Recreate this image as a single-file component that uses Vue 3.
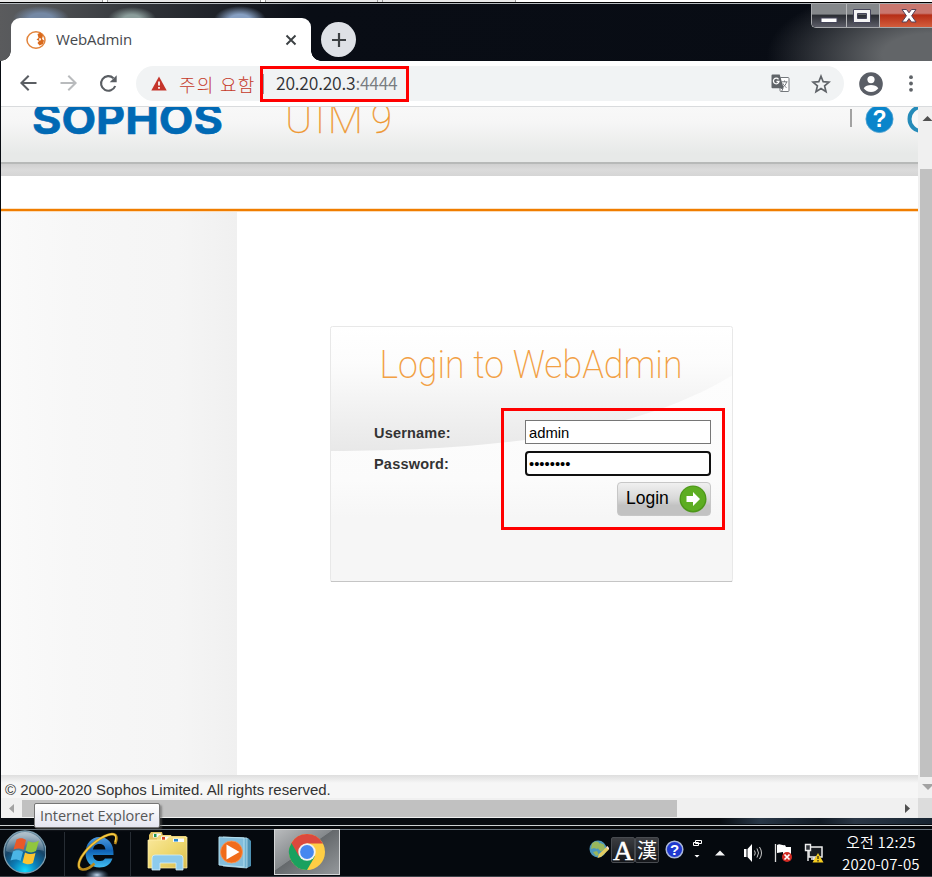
<script setup>
import { ref } from 'vue'

const username = ref('admin')
const password = ref('password')
</script>

<template>
  <div class="screen">
    <div class="behind"><i></i><i></i><i></i><i></i></div>

    <header class="titlebar">
      <div class="tab">
        <svg class="favicon" width="20" height="20" viewBox="0 0 20 20">
          <ellipse cx="10" cy="10" rx="9" ry="8.200" fill="#fff" stroke="#e2833a" stroke-width="1.500" />
          <path d="M11.500 4l3-1.500 2.500 3-1 3.500 2 1.500-1 3.500-3.500 1.500-2-2.500 1.500-2-2.500-1.500 2-1.500z" fill="#d9691c" />
          <path d="M13 8.500l1.500-.5.5 2-1.500 1z" fill="#fff" />
        </svg>
        <span class="tab-title">WebAdmin</span>
        <svg class="tab-close" width="12" height="12" viewBox="0 0 12 12"><path d="M1.500 1.500l9 9M10.500 1.500l-9 9" stroke="#3c4043" stroke-width="1.900" /></svg>
      </div>
      <div class="new-tab">
        <svg width="16" height="16" viewBox="0 0 16 16"><path d="M8 1v14M1 8h14" stroke="#3c4043" stroke-width="2.200" /></svg>
      </div>
      <div class="window-buttons">
        <div class="wb min"><svg width="18" height="8" viewBox="0 0 18 8"><rect x="1" y="2" width="16" height="4.500" fill="#fff" stroke="#45455a" /></svg></div>
        <div class="wb max"><svg width="20" height="16" viewBox="0 0 20 16"><path fill-rule="evenodd" d="M1.500 1.500h17v13h-17zM5.500 5.500v5h9v-5z" fill="#f4f4f4" stroke="#45455a" /></svg></div>
        <div class="wb close"><svg width="18" height="16" viewBox="0 0 18 16"><path d="M2 1.500h4.500L9 4.800l2.500-3.300H16L11.600 7.800l4.500 6.200h-4.700L9 10.600 6.600 14H1.900l4.500-6.200z" fill="#fff" stroke="#51425a" /></svg></div>
      </div>
    </header>

    <nav class="toolbar">
      <svg class="nav" width="20" height="20" viewBox="0 0 20 20"><path d="M18.500 9H4M10.700 1.700L3.400 9l7.300 7.300" fill="none" stroke="#5a5e63" stroke-width="2" /></svg>
      <svg class="nav" width="20" height="20" viewBox="0 0 20 20"><path d="M2.500 9h14.500M10.300 1.700L17.600 9l-7.300 7.300" fill="none" stroke="#b9bbbd" stroke-width="2" /></svg>
      <svg class="nav" width="20" height="20" viewBox="0 0 20 20"><path d="M17.200 12A7.300 7.300 0 1 1 15.500 4.200" fill="none" stroke="#5a5e63" stroke-width="2.100" /><path d="M18.700 1.300v7h-7z" fill="#5a5e63" /></svg>
      <div class="omnibox">
        <svg width="16" height="15" viewBox="0 0 16 15"><path d="M8 0.500L15.700 14.500H.3z" fill="#c5352b" /><path d="M8 5.500v4M8 11v1.800" stroke="#fff" stroke-width="1.700" /></svg>
        <span class="warn">주의 요함</span>
        <span class="sep"></span>
        <span class="url">20.20.20.3<em>:4444</em></span>
        <svg class="translate" width="19" height="19" viewBox="0 0 19 19">
          <rect x="9" y="3.500" width="9" height="14" rx="1" fill="#fff" stroke="#74787c" />
          <path d="M1.500.5h7.200l4 13.700H1.500a1 1 0 0 1-1-1V1.500a1 1 0 0 1 1-1z" fill="#606468" />
          <path d="M7.500 5.300A2.800 2.800 0 1 0 8 7.500H5.500" fill="none" stroke="#fff" stroke-width="1.300" />
          <path d="M10.500 7.800h6M13.500 6.500v1.300M15.500 8c-.5 2.500-2 4.200-3.500 5M12 9.500c.8 2 2.200 3.200 3.500 4M10 14.500l2 0-1.500 3" fill="none" stroke="#74787c" />
        </svg>
        <svg class="star" width="20" height="20" viewBox="0 0 20 20"><path d="M10 2.200l2.200 5.500 5.900.4-4.500 3.800 1.400 5.800-5-3.200-5 3.200 1.400-5.800L1.900 8.100l5.900-.4z" fill="none" stroke="#5f6368" stroke-width="1.700" /></svg>
      </div>
      <svg class="profile" width="24" height="24" viewBox="0 0 24 24"><circle cx="12" cy="12" r="11.800" fill="#5a5e66" /><circle cx="12" cy="7.600" r="3.600" fill="#fff" /><path d="M4.700 16.300c1.300-2.500 4.600-3.300 7.300-3.300s6 .8 7.300 3.300C17.600 18.600 15.300 20 12 20s-5.600-1.400-7.300-3.700z" fill="#fff" /></svg>
      <svg class="dots" width="4" height="18" viewBox="0 0 4 18"><g fill="#5f6368"><circle cx="2" cy="2.200" r="1.900" /><circle cx="2" cy="8.500" r="1.900" /><circle cx="2" cy="14.800" r="1.900" /></g></svg>
    </nav>

    <div class="viewport">
      <main class="page">
        <div class="brandbar">
          <svg class="logo" width="400" height="55" viewBox="0 0 400 55">
            <text class="sophos" x="31" y="27" textLength="191" lengthAdjust="spacingAndGlyphs">SOPHOS</text>
            <text class="utm" x="284" y="26" textLength="78" lengthAdjust="spacing">UTM</text>
            <text class="utm" x="370" y="26" textLength="21" lengthAdjust="spacingAndGlyphs">9</text>
          </svg>
          <svg class="help" width="70" height="55" viewBox="0 0 70 55">
            <rect x="2" y="2" width="2" height="18" fill="#a2a2a2" />
            <circle cx="31.500" cy="12" r="13.600" fill="#0a85cb" stroke="#56a3cf" stroke-width=".8" />
            <text x="31.500" y="20" text-anchor="middle">?</text>
            <circle cx="73.500" cy="12" r="12" fill="#f8f8f8" stroke="#258bb9" stroke-width="4" />
          </svg>
        </div>
        <div class="shade"></div>
        <div class="menu-row"></div>
        <div class="content">
          <aside class="sidebar"></aside>
          <section class="stage">
            <form class="card" @submit.prevent>
              <svg class="swoosh" width="403" height="256" viewBox="0 0 403 256">
                <defs>
                  <linearGradient id="upper" x1="0" y1="0" x2="0" y2="1"><stop offset="0" stop-color="#fff" /><stop offset=".3" stop-color="#fcfcfc" /><stop offset="1" stop-color="#e8e8e8" /></linearGradient>
                  <linearGradient id="lower" x1="0" y1="0" x2="0" y2="1"><stop offset=".2" stop-color="#fdfdfd" /><stop offset=".6" stop-color="#fbfbfb" /><stop offset=".75" stop-color="#f6f6f6" /><stop offset="1" stop-color="#f6f6f6" /></linearGradient>
                </defs>
                <rect width="403" height="256" fill="url(#lower)" />
                <path d="M0 0h403v49C325 96 210 125 0 125z" fill="url(#upper)" />
                <rect x=".5" y=".5" width="402" height="255" rx="2" fill="none" stroke="#e8e8e8" />
                <path d="M1 255.500h401" stroke="#c5c5c5" />
                <text class="headline" x="49.500" y="52" textLength="303" lengthAdjust="spacingAndGlyphs">Login to WebAdmin</text>
              </svg>
              <div class="fields">
                <label for="user">Username:</label>
                <input id="user" v-model="username" type="text" />
                <label for="pass">Password:</label>
                <input id="pass" v-model="password" class="active" type="password" />
                <button class="login">
                  <span>Login</span>
                  <svg width="28" height="28" viewBox="0 0 28 28">
                    <circle cx="14" cy="14" r="13.500" fill="#4d961a" /><circle cx="14" cy="13.700" r="12.200" fill="#5dad22" />
                    <path d="M7.500 11h6.500V7l7 7-7 7v-4H7.500z" fill="#fff" />
                  </svg>
                </button>
              </div>
            </form>
          </section>
        </div>
        <footer class="copyright">© 2000-2020 Sophos Limited. All rights reserved.</footer>
      </main>
      <div class="vscroll">
        <svg width="14" height="62" viewBox="0 0 14 62"><path d="M4.500 14l5-5 5 5z" fill="#505050" /></svg>
        <div class="vthumb"></div>
        <svg width="14" height="21" viewBox="0 0 14 21"><path d="M4 7h12l-6 6z" fill="#a3a3a3" /></svg>
      </div>
    </div>
    <div class="hscroll">
      <svg width="21" height="20" viewBox="0 0 21 20"><path d="M13 6v9l-5-4.500z" fill="#a3a3a3" /></svg>
      <div class="hthumb"></div>
      <svg class="right-arrow" width="14" height="20" viewBox="0 0 14 20"><path d="M1 6v9l5-4.500z" fill="#505050" /></svg>
      <div class="corner"></div>
    </div>
    <div class="frame-bottom"></div>

    <footer class="taskbar">
      <svg class="start" width="46" height="48" viewBox="0 0 46 48">
        <defs>
          <radialGradient id="orb" cx=".5" cy=".95" r=".85"><stop offset="0" stop-color="#12dcff" /><stop offset=".35" stop-color="#0b7db7" /><stop offset=".7" stop-color="#164568" /><stop offset="1" stop-color="#557991" /></radialGradient>
          <linearGradient id="gloss" x1="0" y1="0" x2="0" y2="1"><stop offset="0" stop-color="#fff" stop-opacity=".55" /><stop offset="1" stop-color="#fff" stop-opacity=".15" /></linearGradient>
        </defs>
        <circle cx="25" cy="23" r="21" fill="url(#orb)" stroke="#7f9fb0" stroke-width="1.300" />
        <path d="M6 22a19 19 0 0 1 38 0c-10-4-28 5-38 0z" fill="url(#gloss)" />
        <path d="M16.500 10.500c4-2 6.500-1.500 9.500.5l-2.500 10c-3-2-6-2-10-.5z" fill="#eb5928" />
        <path d="M28 12c4 2 7 2 11-.5l-3 10.500c-3.500 2-7 2-10.500-.5z" fill="#91c63e" />
        <path d="M13 22.500c4-2 7-1.500 10 .5l-2.500 9c-3-2-6-2-10-.5z" fill="#4bb5e6" />
        <path d="M25 23.500c4 2 7 2 10.500.5l-2.500 10c-3.500 2-7 1.500-10.500-.5z" fill="#fbc431" />
      </svg>
      <i class="divider first"></i>
      <svg class="ie" width="44" height="48" viewBox="0 0 44 48">
        <defs>
          <radialGradient id="glow"><stop offset="0" stop-color="#c5daf0" /><stop offset="1" stop-color="#50769a" stop-opacity="0" /></radialGradient>
          <linearGradient id="ieb" x1="0" y1="0" x2="0" y2="1"><stop offset="0" stop-color="#4e9be0" /><stop offset=".45" stop-color="#0f62b5" /><stop offset="1" stop-color="#42bff3" /></linearGradient>
        </defs>
        <ellipse cx="22" cy="46" rx="12" ry="6" fill="url(#glow)" />
        <path d="M38.500 26H18c.5 4 3 6 7 6 2.500 0 4-.8 5-2.500h7.500C35.500 35.500 31 38.500 24.500 38.500 16 38.500 10.500 33 10.500 24S16 8 24.500 8c8.500 0 14.500 6.500 14 18zM18 20.500h12.500c-.5-3.800-2.800-5.500-6-5.500s-5.800 1.700-6.500 5.500z" fill="url(#ieb)" />
        <path d="M40 15c2.500-6 2-10-3-10C28 6 14 16 6.500 28c-4.500 8-3 12 1 12.500 4 .5 8-2 12-6" fill="none" stroke="#b98a1c" stroke-width="2.600" />
        <path d="M40 13c1.500-5 1-8-3-8C28 6 14 16 6.500 28c-3 5-3 9-2 11" fill="none" stroke="#f5cb43" stroke-width="1.300" />
      </svg>
      <i class="divider second"></i>
      <svg class="explorer" width="42" height="48" viewBox="0 0 42 48">
        <defs><linearGradient id="fold" x1="0" y1="0" x2="1" y2="1"><stop offset="0" stop-color="#fae89d" /><stop offset=".5" stop-color="#eed86f" /><stop offset="1" stop-color="#d6bb51" /></linearGradient></defs>
        <path d="M2 6l2-3h11l1 4h23v30H2z" fill="#e1c160" />
        <rect x="6" y="4.500" width="8" height="4" fill="#f5f9f8" /><rect x="7" y="5" width="2.500" height="3" fill="#219653" />
        <path d="M10 9l2-3h12l2 5h14v25H10z" fill="#efd77a" />
        <rect x="14" y="7.500" width="9" height="4" fill="#f8fafc" /><rect x="15" y="8" width="3" height="3" fill="#d74325" />
        <path d="M1 11h18l3-3h18v31H1z" fill="url(#fold)" stroke="#fff1af" stroke-width=".7" />
        <rect x="26" y="9.500" width="11" height="3.500" fill="#f8fafc" /><rect x="27" y="10" width="4" height="2.500" fill="#2386cf" />
        <path d="M5 41V29q0-3 3-3h25q3 0 3 3v12h-7v-7H13v7z" fill="#8dcbed" stroke="#d6eef6" stroke-width=".8" />
      </svg>
      <svg class="media" width="36" height="48" viewBox="0 0 36 48">
        <path d="M8 8l22 1 3 3v25l-4 2-21-2z" fill="#4e91b3" /><path d="M5 8l24 1v30L5 37z" fill="#6fb2d2" stroke="#c8e5f0" stroke-width=".7" />
        <path d="M1 8l25 1v29L1 36z" fill="#83bddb" stroke="#b3dfef" />
        <circle cx="13.500" cy="23" r="11" fill="#f06c1b" stroke="#f89a5c" stroke-width=".8" /><path d="M8.500 15.500v15L21.500 23z" fill="#fff" />
      </svg>
      <div class="chrome-task">
        <svg width="38" height="38" viewBox="0 0 38 38">
          <circle cx="19" cy="19" r="18" fill="#ffce44" />
          <path d="M3.400 10A18 18 0 0 0 19 37L26.800 23.500 19 19z" fill="#1aa15f" />
          <path d="M3.400 10A18 18 0 0 1 34.600 10L35 10.500H19L11.200 23.500z" fill="#dc493d" />
          <circle cx="19" cy="19" r="8.700" fill="#f2f2f2" /><circle cx="19" cy="19" r="6.900" fill="#4687f0" />
        </svg>
      </div>

      <div class="tray">
        <svg class="globe" width="20" height="20" viewBox="0 0 20 20"><circle cx="9" cy="9" r="8.500" fill="#4b97bd" /><path d="M3 3.500c5-4 8-1 8 2.500l-3 3-3-1-3 1zM11 3l4 1.500 1 4-4 3-3-3zM4 12l4-1 2 4-3 1z" fill="#98b65d" /><path d="M8.500 18l1.500-4 7.500-7 2.500 2.500-8 7.500z" fill="#e4cc61" /><path d="M17 7l1.500-1 2 2.500-1.500 1z" fill="#f7ded7" /></svg>
        <span class="ime latin">A</span>
        <span class="ime hanja">漢</span>
        <svg class="qmark" width="19" height="19" viewBox="0 0 19 19"><circle cx="9.500" cy="9.500" r="8.300" fill="#1f39cf" stroke="#aab6d8" stroke-width="1.500" /><text x="9.500" y="15" text-anchor="middle">?</text></svg>
        <svg class="restore" width="9" height="18" viewBox="0 0 9 18"><path d="M2.500.5h6v3h-6zM.5 2.500h5v3h-5z" fill="#0a0d13" stroke="#fff" /><path d="M1.500 15h5L4 17.500z" fill="#fff" /></svg>
        <svg class="up" width="10" height="6" viewBox="0 0 10 6"><path d="M0 5.500L5 .5l5 5z" fill="#f4f4f4" /></svg>
        <svg class="sound" width="20" height="20" viewBox="0 0 20 20"><path d="M1 6h2.500v8H1zM4.500 6L9 1v18l-4.500-5z" fill="#fff" /><path d="M11.500 7.500q1.500 2.500 0 5M14 5.500q3 4.500 0 9M16.500 4q4 6 0 12" fill="none" stroke="#c9c9c9" /></svg>
        <svg class="flag" width="20" height="20" viewBox="0 0 20 20"><path d="M1.500 1v18" stroke="#ddd" stroke-width="1.300" /><path d="M3 2c3-2 5 1 8 0l1 2h5v7H9V9L3 10z" fill="#fff" /><circle cx="13" cy="14" r="5" fill="#d22b24" /><path d="M10.500 11.500l5 5M15.500 11.500l-5 5" stroke="#fff" stroke-width="1.700" /></svg>
        <svg class="network" width="20" height="20" viewBox="0 0 20 20"><path d="M5 4h13v10H5zM7 16h6M10 14v3" fill="#191d22" stroke="#eee" stroke-width="1.500" /><path d="M1.500 1.500h5v6h-5zM4 7.500V18" fill="#30343a" stroke="#eee" stroke-width="1.400" /><path d="M14 10l5.500 9.500h-11z" fill="#f6cd20" /><path d="M14 13v3M14 17v1.500" stroke="#3c3517" stroke-width="1.400" /></svg>
        <div class="clock"><span class="time">오전 12:25</span><span class="date">2020-07-05</span></div>
      </div>
    </footer>

    <div class="tooltip">Internet Explorer</div>
    <div class="mark address"></div>
    <div class="mark credentials"></div>
  </div>
</template>

<style>
body { margin: 0; overflow: hidden; }
</style>

<style scoped>
* { box-sizing: border-box; }
svg { display: block; flex: none; }
.screen { position: relative; width: 932px; height: 877px; overflow: hidden; background: #080c12; font-family: "Liberation Sans", sans-serif; }
.behind { display: flex; height: 2px; background: #e9e9e9; padding-left: 102px; }
.behind i { width: 6px; height: 2px; border: solid #999; border-width: 0 1px; background: #fff; flex: none; }
.behind i:nth-child(2) { margin-left: 152px; }
.behind i:nth-child(3) { margin-left: 111px; background: none; }
.behind i:nth-child(4) { flex: 1; margin-left: 132px; border-right: 0; }

.titlebar {
  display: flex; height: 59px; border-top: 1px solid #000; padding-left: 1px;
  box-shadow: inset 0 1px #b3b8bc;
  background:
    radial-gradient(ellipse 28px 12px at 41px 15px, #7488a4 40%, transparent),
    radial-gradient(ellipse 24px 12px at 132px 16px, #8b9d9b 35%, transparent),
    radial-gradient(ellipse 26px 14px at 240px 17px, #869fc2 40%, transparent),
    radial-gradient(ellipse 165px 72px at 932px 52px, #626568 30%, transparent),
    linear-gradient(90deg, #5a5b5d 0, #56585b 25px, #303338 145px, #090d15 310px, #080c14);
}
.tab { position: relative; display: flex; align-items: center; align-self: flex-end; margin-left: 10px; width: 300px; height: 43px; padding: 0 14px 0 15px; background: #fff; border-radius: 9px 9px 0 0; }
.tab::before, .tab::after { content: ""; position: absolute; bottom: 0; width: 10px; height: 10px; }
.tab::before { left: -10px; background: radial-gradient(circle at 0 0, transparent 9.500px, #fff 10px); }
.tab::after { right: -10px; background: radial-gradient(circle at 100% 0, transparent 9.500px, #fff 10px); }
.tab-title { margin: 0 0 2px 10px; font: 15px "Open Sans", sans-serif; letter-spacing: -.13px; color: #45494d; }
.tab-close { margin-left: auto; }
.new-tab { display: grid; place-items: center; width: 35px; height: 35px; margin: 19px 0 0 10px; border-radius: 50%; background: #dee1e6; }
.window-buttons { display: flex; height: 25px; margin-left: auto; border: solid #a7a9ac; border-width: 1px 0 1px 1px; border-radius: 0 0 0 5px; overflow: hidden; }
.wb { display: grid; place-items: center; height: 23px; background: linear-gradient(#85888b 0 44%, #292c32 48%, #5c5d68); border-left: 1px solid #b6b7b9; }
.wb:first-child { border: 0; }
.min { width: 34px; padding-top: 8px; }
.max { width: 33px; padding-right: 2px; }
.close { width: 53px; background: linear-gradient(#c9776f 0 40%, #b62e17 48%, #d35d3c); padding-left: 6px; }

.toolbar { display: flex; align-items: center; height: 46px; margin-left: 1px; padding: 0 15px 0 17px; background: #fff; border-bottom: 1px solid #d9dbdd; }
.nav { margin-right: 20px; }
.omnibox { display: flex; align-items: center; height: 35px; width: 708px; margin-left: -2px; padding: 0 13px 0 15px; border-radius: 18px; background: #f1f3f4; }
.warn { width: 76px; margin-left: 12px; font: 300 18px "Noto Sans CJK KR", sans-serif; line-height: 34px; letter-spacing: 1.300px; color: #c53929; white-space: nowrap; }
.sep { width: 2px; height: 20px; margin-left: 7px; background: #9a9da0; }
.url { margin-left: 12px; font: 17.500px "Noto Sans CJK KR", sans-serif; font-weight: 350; letter-spacing: -.2px; line-height: 32px; padding-bottom: 2px; color: #303134; }
.url em { font-style: normal; color: #787c80; }
.translate { margin-left: auto; }
.star { margin-left: 21px; }
.profile { margin-left: 15px; }
.dots { margin-left: auto; margin-right: 4px; }

.viewport { display: flex; height: 691px; margin-left: 1px; }
.page { width: 917px; background: #fff; display: flex; flex-direction: column; }
.brandbar { display: flex; justify-content: space-between; height: 57px; flex: none; background: linear-gradient(#f8f8f8, #f6f6f6 28%, #e7e9e8 85%); border-bottom: 2px solid #b7b9b8; overflow: hidden; }
.sophos { font: 700 41px Inter, sans-serif; fill: #0069b4; stroke: #0069b4; stroke-width: .6; }
.utm { font: 100 41px Roboto, sans-serif; fill: #ee9731; stroke: #ee9731; stroke-width: .3; }
.help { overflow: hidden; }
.help text { font: bold 23px "Liberation Sans", sans-serif; fill: #fff; }
.shade { height: 12px; flex: none; background: linear-gradient(#d0d0d0, #dbdbdb 50%, #d5d5d5); }
.menu-row { height: 35px; flex: none; border-bottom: 2px solid #f07d00; box-shadow: 0 1px #fbdcb9, inset 0 -1px #fbe3c6; position: relative; }
.content { display: flex; flex: 1; }
.sidebar { width: 236px; background: linear-gradient(90deg, #fafafa, #f7f7f7 30%, #f5f5f5 75%, #f0f0f0); }
.stage { flex: 1; padding: 115px 0 0 93px; }
.card { position: relative; width: 403px; height: 256px; }
.swoosh { position: absolute; left: 0; top: 0; }
.headline { font: 200 38.500px Roboto, sans-serif; fill: #f2a044; }
.fields { position: relative; display: grid; grid-template-columns: 151px 186px; row-gap: 6px; padding: 94px 0 0 44px; align-items: center; }
.fields label { font-size: 14.500px; font-weight: bold; letter-spacing: .2px; color: #333; }
.fields input { width: 186px; height: 25px; padding: 1px 3px; border: 1px solid #767676; background: #fff; font: 14.800px "Liberation Sans", sans-serif; color: #000; outline: 0; }
.fields input[type="text"] { height: 24px; margin-bottom: 1px; padding-top: 3px; }
.fields input.active { border: 2px solid #101010; border-radius: 4px; padding: 0 2px; font-size: 14.800px; }
.login { grid-column: 2; justify-self: end; display: flex; align-items: center; justify-content: space-between; width: 94px; height: 34px; padding: 0 3px 0 8px; border: 1px solid #c7c7c7; border-radius: 4px; background: linear-gradient(#f0f0f0, #d8d8d8 50%, #c2c2c2 70%, #c2c2c2); font: 17.500px "Liberation Sans", sans-serif; color: #000; }
.login span { line-height: 29px; padding-bottom: 2px; }
.copyright { height: 23px; flex: none; padding-left: 4px; background: linear-gradient(#dedede, #f6f6f6 8px); font-size: 15px; line-height: 30px; letter-spacing: -.01px; color: #333; white-space: nowrap; }
.vscroll { display: flex; flex-direction: column; width: 14px; background: #f0f0f0; }
.vthumb { flex: 1; margin-left: 2px; background: #c1c1c1; }
.hscroll { display: flex; height: 20px; margin-left: 1px; background: #f0f0f0; }
.hthumb { width: 655px; height: 17px; margin-top: 2px; background: #c1c1c1; }
.right-arrow { margin-left: auto; }
.corner { width: 14px; background: #dcdcdc; }
.frame-bottom { height: 8px; background: linear-gradient(90deg, transparent 720px, #283747 760px, #101923 820px, #2a3645 855px, #172431 932px) 0 0 / 100% 6px no-repeat, #070b10; border-bottom: 1px solid #cbd0d2; }

.taskbar { display: flex; align-items: flex-start; height: 51px; padding-top: 3px; background: linear-gradient(#05070a 0 3px, #65707a 3px 4px, #05090e 4px); border-bottom: 1px solid #3d4248; }
.divider { width: 1px; height: 44px; margin-top: 3px; background: #262c33; flex: none; }
.first { margin-left: 18px; }
.ie { margin-left: 10px; }
.second { margin-left: 11px; }
.explorer { margin-left: 16px; }
.media { margin-left: 29px; }
.chrome-task { display: grid; place-items: center; width: 66px; height: 46px; margin-left: 20px; border: 1px solid #d5d7d8; background: linear-gradient(145deg, #b9bbbd, #85898c 45%, #65696c 46%, #94989b); }
.tray { display: flex; flex: 1; height: 48px; padding-left: 249px; color: #fff; }
.globe { margin-top: 11px; }
.ime { width: 24px; height: 26px; margin-top: 8px; background: linear-gradient(#3b3d41, #14161a); border: 1px solid #484b50; border-radius: 2px; text-align: center; }
.latin { margin-left: 2px; font: 28px "Liberation Serif", serif; line-height: 26px; -webkit-text-stroke: .5px #fff; }
.hanja { font: 400 20px "Noto Sans CJK KR", sans-serif; line-height: 24px; }
.qmark { margin: 11px 0 0 6px; }
.qmark text { font: bold 15px "Liberation Sans", sans-serif; fill: #fff; }
.restore { margin: 11px 0 0 9px; }
.up { margin: 21px 0 0 13px; }
.sound { margin: 14px 0 0 18px; }
.flag { margin: 14px 0 0 11px; }
.network { margin: 14px 0 0 10px; }
.clock { display: flex; flex-direction: column; align-items: center; margin: 2px 0 0 18px; font: 15px "Noto Sans CJK KR", sans-serif; font-weight: 350; line-height: 22px; white-space: nowrap; }
.time { letter-spacing: .25px; }
.date { font-size: 15px; letter-spacing: .15px; }

.tooltip { position: absolute; left: 34px; top: 803px; width: 126px; height: 25px; border: 1px solid #767676; border-radius: 2px; background: linear-gradient(#fff, #e4e5f0); box-shadow: 2px 2px 2px #5558; font: 14.500px "Open Sans", sans-serif; letter-spacing: -.06px; line-height: 24px; text-align: center; color: #575757; white-space: nowrap; }
.mark { position: absolute; border: 3px solid #f00; }
.address { left: 260px; top: 66px; width: 149px; height: 36px; }
.credentials { left: 501px; top: 408px; width: 224px; height: 122px; }
</style>
